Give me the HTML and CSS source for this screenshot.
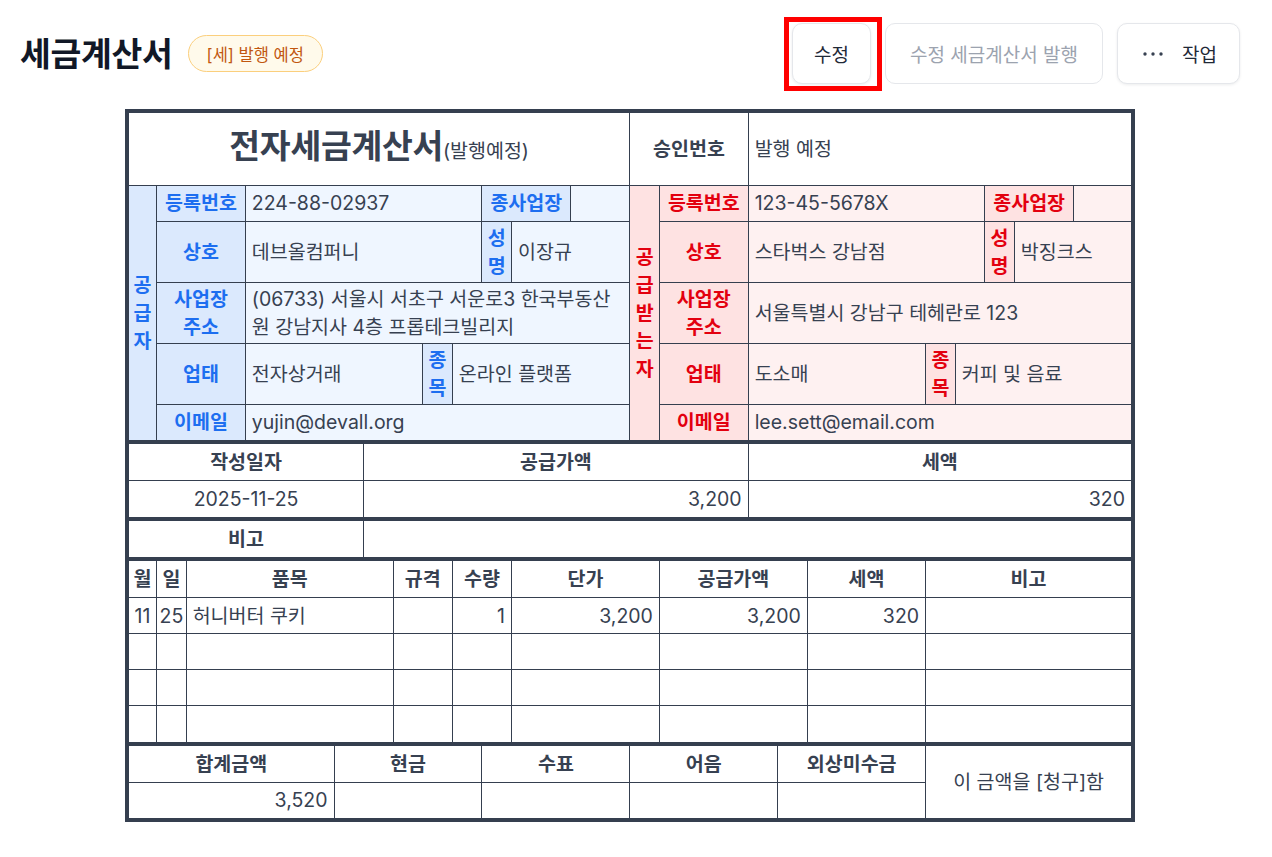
FILE: index.html
```html
<!DOCTYPE html>
<html lang="ko">
<head>
  <meta charset="UTF-8">
  <meta name="viewport" content="width=device-width, initial-scale=1.0">
  <title>세금계산서</title>
  <link rel="stylesheet" href="styles.css">
</head>
<body>
  <div class="page">
    <header class="page-header">
      <div class="heading">
        <h1>세금계산서</h1>
        <span class="badge">[세] 발행 예정</span>
      </div>
      <div class="actions">
        <span class="highlight">
          <button class="btn">수정</button>
        </span>
        <button class="btn btn-disabled" disabled>수정 세금계산서 발행</button>
        <button class="btn btn-more">
          <svg width="22" height="6" viewBox="0 0 22 6"><circle cx="3" cy="3" r="1.7"/><circle cx="11" cy="3" r="1.7"/><circle cx="19" cy="3" r="1.7"/></svg>
          <span>작업</span>
        </button>
      </div>
    </header>

    <table class="invoice">
      <colgroup>
        <col><col><col><col><col><col><col><col><col><col><col><col><col><col><col><col><col>
        <col><col><col><col><col><col><col><col><col><col><col><col><col><col><col><col><col>
      </colgroup>
      <tr class="title-row">
        <td colspan="17" class="doc-title"><strong>전자세금계산서</strong><span>(발행예정)</span></td>
        <th colspan="4">승인번호</th>
        <td colspan="13">발행 예정</td>
      </tr>

      <!-- 공급자 / 공급받는자 -->
      <tr>
        <th rowspan="5" class="side sup">공<br>급<br>자</th>
        <th colspan="3" class="lbl sup">등록번호</th>
        <td colspan="8" class="val sup">224-88-02937</td>
        <th colspan="3" class="lbl sup">종사업장</th>
        <td colspan="2" class="val sup"></td>
        <th rowspan="5" class="side rec">공<br>급<br>받<br>는<br>자</th>
        <th colspan="3" class="lbl rec">등록번호</th>
        <td colspan="8" class="val rec">123-45-5678X</td>
        <th colspan="3" class="lbl rec">종사업장</th>
        <td colspan="2" class="val rec"></td>
      </tr>
      <tr>
        <th colspan="3" class="lbl sup">상호</th>
        <td colspan="8" class="val sup">데브올컴퍼니</td>
        <th class="lbl sup">성<br>명</th>
        <td colspan="4" class="val sup">이장규</td>
        <th colspan="3" class="lbl rec">상호</th>
        <td colspan="8" class="val rec">스타벅스 강남점</td>
        <th class="lbl rec">성<br>명</th>
        <td colspan="4" class="val rec">박징크스</td>
      </tr>
      <tr>
        <th colspan="3" class="lbl sup">사업장<br>주소</th>
        <td colspan="13" class="val sup">(06733) 서울시 서초구 서운로3 한국부동산원 강남지사 4층 프롭테크빌리지</td>
        <th colspan="3" class="lbl rec">사업장<br>주소</th>
        <td colspan="13" class="val rec">서울특별시 강남구 테헤란로 123</td>
      </tr>
      <tr>
        <th colspan="3" class="lbl sup">업태</th>
        <td colspan="6" class="val sup">전자상거래</td>
        <th class="lbl sup">종<br>목</th>
        <td colspan="6" class="val sup">온라인 플랫폼</td>
        <th colspan="3" class="lbl rec">업태</th>
        <td colspan="6" class="val rec">도소매</td>
        <th class="lbl rec">종<br>목</th>
        <td colspan="6" class="val rec">커피 및 음료</td>
      </tr>
      <tr class="pre">
        <th colspan="3" class="lbl sup">이메일</th>
        <td colspan="13" class="val sup">yujin@devall.org</td>
        <th colspan="3" class="lbl rec">이메일</th>
        <td colspan="13" class="val rec">lee.sett@email.com</td>
      </tr>

      <!-- 작성일자 -->
      <tr class="sep">
        <th colspan="8">작성일자</th>
        <th colspan="13">공급가액</th>
        <th colspan="13">세액</th>
      </tr>
      <tr class="pre">
        <td colspan="8" class="center">2025-11-25</td>
        <td colspan="13" class="num">3,200</td>
        <td colspan="13" class="num">320</td>
      </tr>

      <tr class="sep pre">
        <th colspan="8">비고</th>
        <td colspan="26"></td>
      </tr>

      <!-- 품목 -->
      <tr class="sep">
        <th class="tight">월</th>
        <th class="tight">일</th>
        <th colspan="7">품목</th>
        <th colspan="2">규격</th>
        <th colspan="2">수량</th>
        <th colspan="5">단가</th>
        <th colspan="5">공급가액</th>
        <th colspan="4">세액</th>
        <th colspan="7">비고</th>
      </tr>
      <tr>
        <td class="tight">11</td>
        <td class="tight">25</td>
        <td colspan="7">허니버터 쿠키</td>
        <td colspan="2"></td>
        <td colspan="2" class="num">1</td>
        <td colspan="5" class="num">3,200</td>
        <td colspan="5" class="num">3,200</td>
        <td colspan="4" class="num">320</td>
        <td colspan="7"></td>
      </tr>
      <tr>
        <td></td><td></td><td colspan="7"></td><td colspan="2"></td><td colspan="2"></td>
        <td colspan="5"></td><td colspan="5"></td><td colspan="4"></td><td colspan="7"></td>
      </tr>
      <tr>
        <td></td><td></td><td colspan="7"></td><td colspan="2"></td><td colspan="2"></td>
        <td colspan="5"></td><td colspan="5"></td><td colspan="4"></td><td colspan="7"></td>
      </tr>
      <tr class="pre">
        <td></td><td></td><td colspan="7"></td><td colspan="2"></td><td colspan="2"></td>
        <td colspan="5"></td><td colspan="5"></td><td colspan="4"></td><td colspan="7"></td>
      </tr>

      <!-- 합계 -->
      <tr class="sep">
        <th colspan="7">합계금액</th>
        <th colspan="5">현금</th>
        <th colspan="5">수표</th>
        <th colspan="5">어음</th>
        <th colspan="5">외상미수금</th>
        <td colspan="7" rowspan="2" class="center">이 금액을 [청구]함</td>
      </tr>
      <tr class="pre">
        <td colspan="7" class="num">3,520</td>
        <td colspan="5"></td>
        <td colspan="5"></td>
        <td colspan="5"></td>
        <td colspan="5"></td>
      </tr>
    </table>
  </div>
</body>
</html>
```

FILE: styles.css
```css
* {
  margin: 0;
  padding: 0;
  box-sizing: border-box;
}

body {
  background: #fff;
  font-family: Inter, "Noto Sans CJK KR", sans-serif;
  color: #374151;
}

.page {
  padding: 23px 32px 40px 20px;
}

/* header */

.page-header {
  display: flex;
  justify-content: space-between;
  align-items: center;
}

.heading {
  display: flex;
  align-items: center;
  gap: 15px;
}

h1 {
  font-size: 33.5px;
  font-weight: 700;
  color: #111827;
  line-height: 40px;
  letter-spacing: -0.3px;
}

.badge {
  display: inline-flex;
  align-items: center;
  height: 37px;
  padding: 0 18px;
  border: 1px solid #fbcf7d;
  border-radius: 20px;
  background: #fffaeb;
  color: #c1570f;
  font-size: 16.5px;
}

.actions {
  display: flex;
  align-items: center;
  gap: 14px;
}

.highlight {
  position: relative;
  display: inline-flex;
}

.highlight::after {
  content: "";
  position: absolute;
  top: -6px;
  left: -8px;
  right: -11px;
  bottom: -7px;
  border: 5px solid #ff0000;
  pointer-events: none;
}

.btn {
  display: inline-flex;
  align-items: center;
  height: 61px;
  padding: 0 21px;
  background: #fff;
  border: 1px solid #e5e7eb;
  border-radius: 10px;
  box-shadow: 0 1px 3px rgba(15, 23, 42, 0.08);
  font-family: inherit;
  font-size: 19px;
  color: #1f2937;
  cursor: pointer;
}

.btn-disabled {
  padding: 0 24px;
  color: #9ca3af;
  box-shadow: none;
  cursor: default;
}

.btn-more {
  gap: 18px;
  padding: 0 22px 0 24px;
}

.btn-more svg {
  fill: #374151;
}

/* invoice table */

.invoice {
  width: 1010px;
  margin: 25px auto 0;
  border-collapse: collapse;
  table-layout: fixed;
  border: 4px solid #353f4f;
  font-size: 19.5px;
}

.invoice th,
.invoice td {
  border: 1px solid #353f4f;
  padding: 2px 6px;
  height: 36px;
  line-height: 28px;
  vertical-align: middle;
}

.invoice th {
  font-weight: 700;
  text-align: center;
  color: #374151;
}

.invoice td {
  text-align: left;
  font-weight: 400;
}

.invoice .tight {
  padding: 2px 0;
  text-align: center;
}

.invoice .num {
  text-align: right;
}

.invoice .center {
  text-align: center;
}

.invoice .pre th,
.invoice .pre td {
  height: 38px;
}

.invoice .sep th,
.invoice .sep td {
  border-top: 4px solid #353f4f;
  height: 38.5px;
}

.invoice .sep.pre th,
.invoice .sep.pre td {
  height: 40.5px;
}

.title-row th,
.title-row td {
  height: 74px;
}

.doc-title {
  text-align: center !important;
}

.doc-title strong {
  font-size: 33.5px;
  font-weight: 700;
  color: #374151;
  letter-spacing: -0.3px;
}

.doc-title span {
  font-size: 19.5px;
}

.invoice .side,
.invoice .lbl {
  padding-left: 0;
  padding-right: 0;
}

.sup.side,
.sup.lbl {
  background: #dbe9fd;
  color: #1d6ef0;
}

.sup.val {
  background: #eff6ff;
}

.rec.side,
.rec.lbl {
  background: #fee2e2;
  color: #e3000f;
}

.rec.val {
  background: #fef1f1;
}
```
